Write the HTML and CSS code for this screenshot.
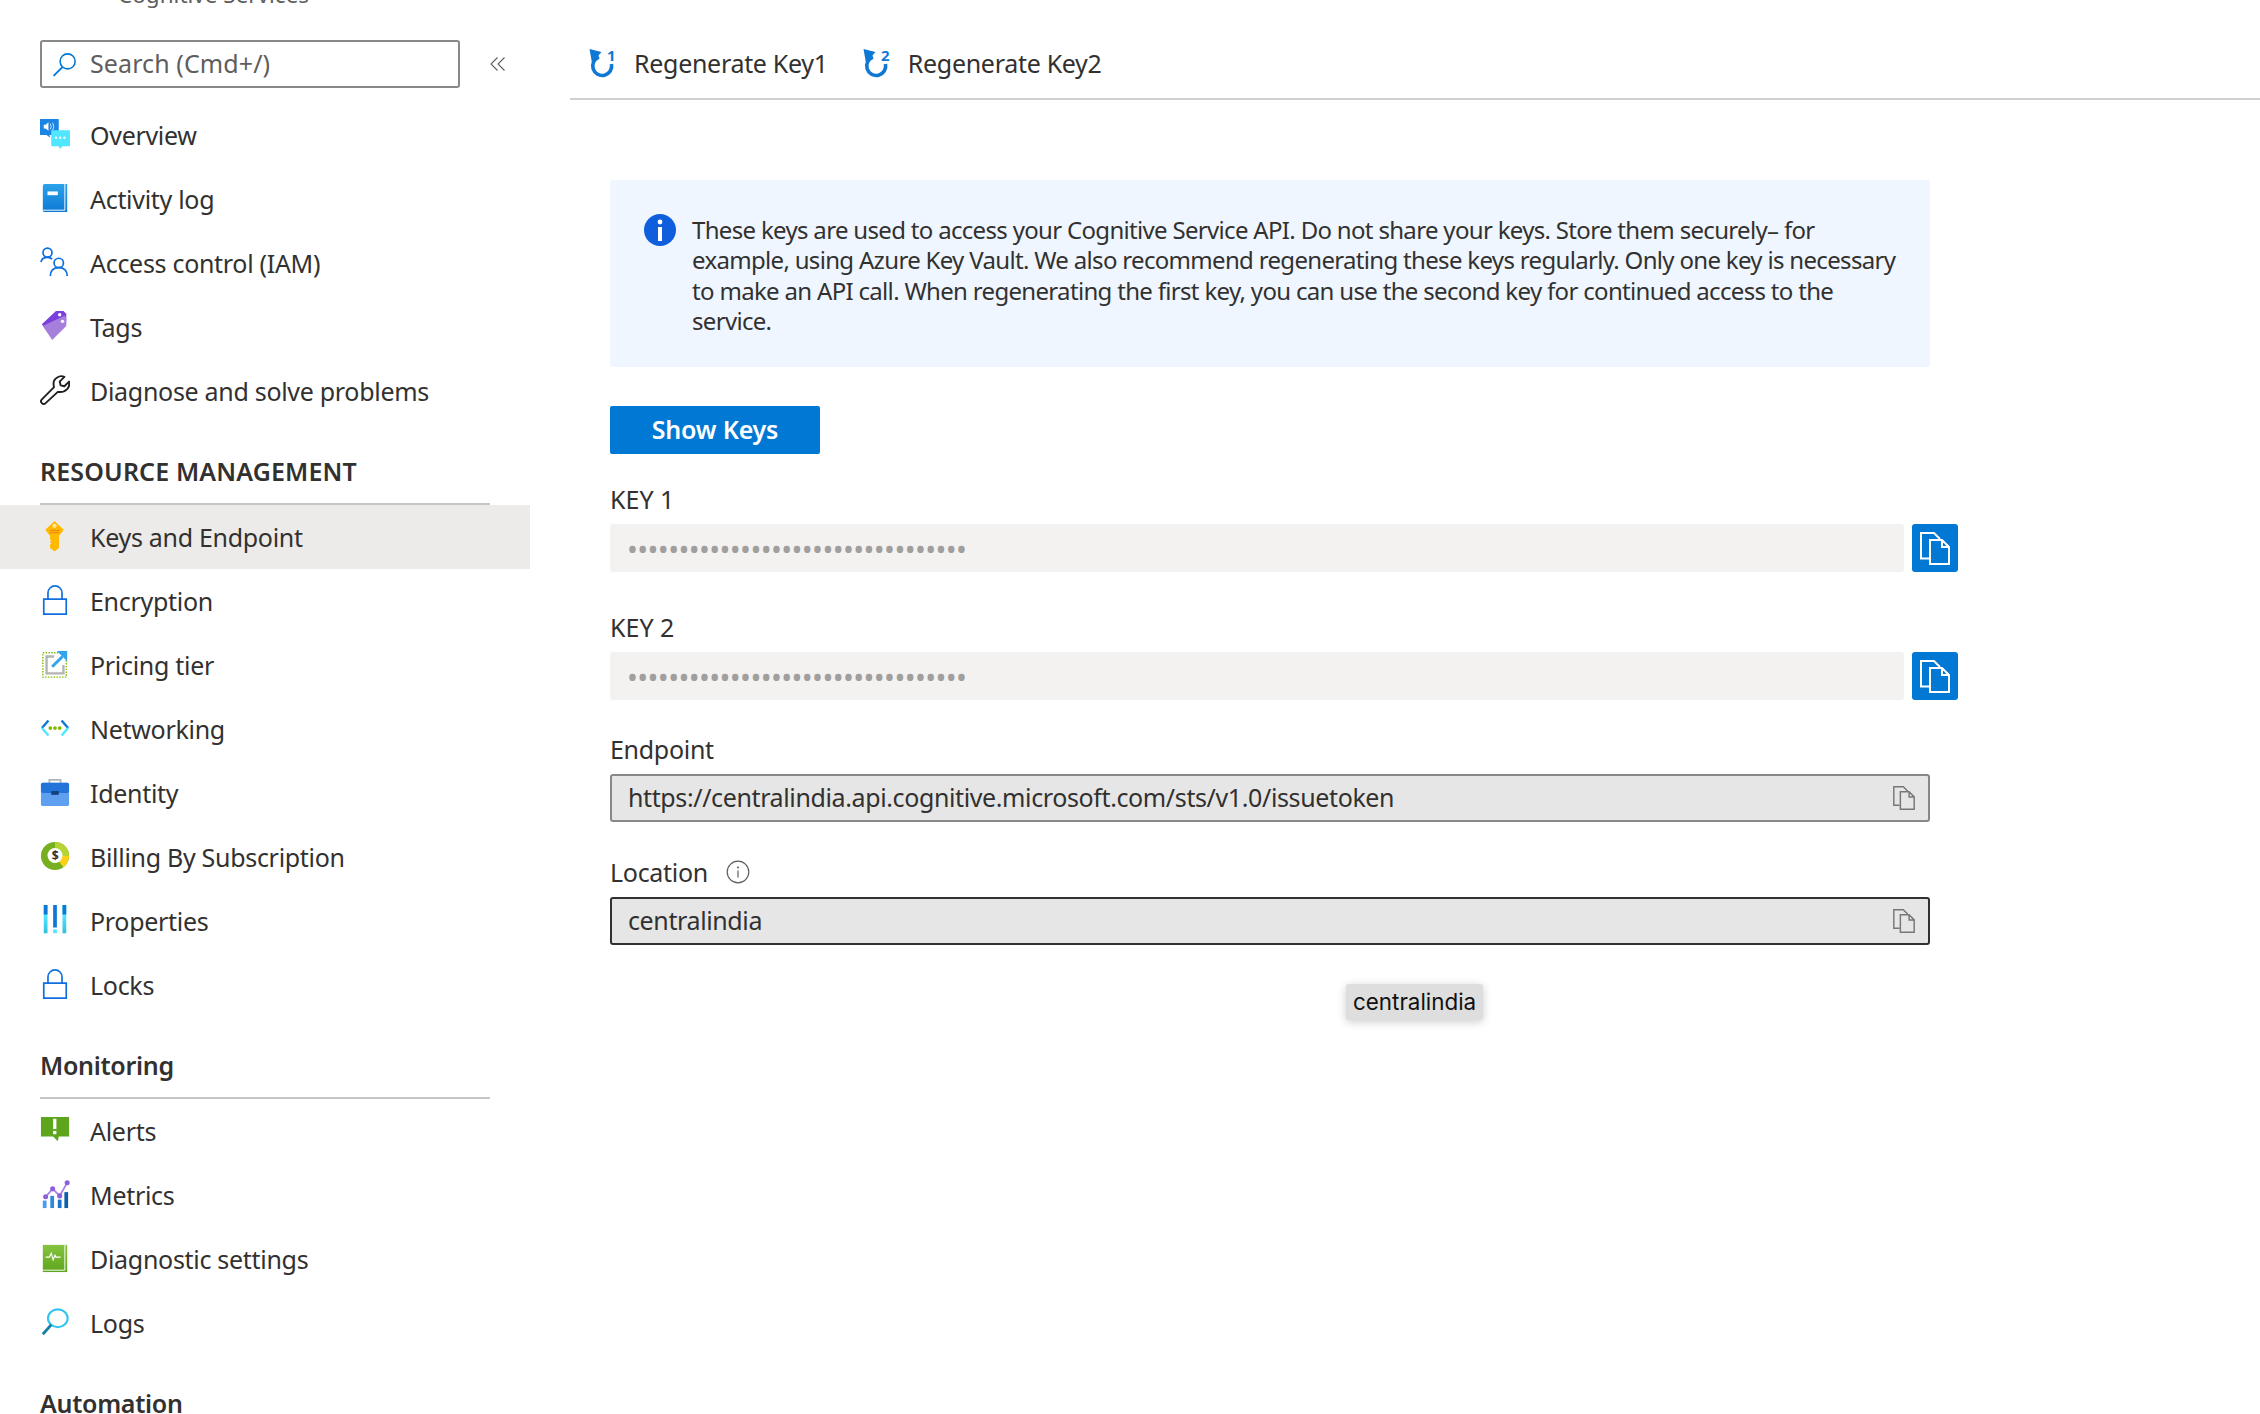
FILE: index.html
```html
<!DOCTYPE html>
<html lang="en">
<head>
    <meta charset="UTF-8">
    <title>Keys and Endpoint</title>
    <link rel="stylesheet" href="styles.css">
</head>
<body>
<div class="page">
    <!-- left menu -->
    <aside class="sidebar">
        <div class="resource-type">Cognitive Services</div>
        <div class="search-row">
            <div class="search-box">
                <svg class="search-icon" viewBox="0 0 24 24"><circle cx="15" cy="9" r="7.2" fill="none" stroke="#0078d4" stroke-width="1.5"/><path d="M10 14.5 1.5 23" stroke="#0078d4" stroke-width="1.8"/></svg>
                <span>Search (Cmd+/)</span>
            </div>
            <svg class="collapse-icon" viewBox="0 0 16 16"><path d="M7.5 1.5 1 8l6.5 6.5M14.5 1.5 8 8l6.5 6.5" fill="none" stroke="#605e5c" stroke-width="1.1"/></svg>
        </div>

        <div class="nav-item">
            <svg class="nav-icon" viewBox="0 0 32 32"><path d="M0 0h20v17H10l1 3-4-3H0z" fill="#1b85e4"/><path d="M12 12h20v17h-8l-3 3-1-3h-8z" fill="#50e6ff"/><path d="M4 6h2l3-2.500v9L6 10H4z" fill="#fff"/><path d="M11 5q2 3 0 6M13.500 4q2.500 4 0 8" fill="none" stroke="#fff" stroke-width="0.800"/><circle cx="17" cy="20" r="1.300" fill="#fff"/><circle cx="21.500" cy="20" r="1.300" fill="#fff"/><circle cx="26" cy="20" r="1.300" fill="#fff"/></svg>
            <span>Overview</span>
        </div>
        <div class="nav-item">
            <svg class="nav-icon" viewBox="0 0 32 32"><defs><linearGradient id="book" x1="0" y1="0" x2="0" y2="1"><stop offset="0" stop-color="#2ba3ea"/><stop offset="1" stop-color="#0f78d4"/></linearGradient></defs><path d="M3 3q0-2 2-2h24v30H5q-2 0-2-2z" fill="url(#book)"/><path d="M26.500 1v28H3" fill="none" stroke="#fff" stroke-width="1"/><rect x="8" y="9" width="11" height="4" fill="#fff"/></svg>
            <span>Activity log</span>
        </div>
        <div class="nav-item">
            <svg class="nav-icon" viewBox="0 0 32 32"><g fill="none" stroke="#0f6fde" stroke-width="1.800"><circle cx="8" cy="6" r="4.800"/><path d="M1 16q1-5 7-5 3 0 5 2"/><circle cx="20" cy="17" r="5"/><path d="M11 31q0-9 9-9t9 9"/></g></svg>
            <span>Access control (IAM)</span>
        </div>
        <div class="nav-item">
            <svg class="nav-icon" viewBox="0 0 32 32"><path d="M17 0h8l3 3v9L12 28 2 14z" fill="#7b3fdc"/><path d="M26 5l2 2v9L13 31 3 16z" fill="#a67fdc"/><circle cx="21" cy="4" r="1.800" fill="#fff"/><circle cx="24" cy="11" r="1.800" fill="#fff"/></svg>
            <span>Tags</span>
        </div>
        <div class="nav-item">
            <svg class="nav-icon" viewBox="0 0 32 32"><path d="M2 26 15 13q-2-7 3-10 4-3 8-1l-5 5 1 4 4 1 5-5q1 5-2 8-4 4-10 3L6 30q-2 2-4 0t0-4z" fill="none" stroke="#201f1e" stroke-width="2" stroke-linejoin="round"/></svg>
            <span>Diagnose and solve problems</span>
        </div>

        <div class="nav-head nav-head-caps">RESOURCE MANAGEMENT</div>
        <div class="nav-item selected">
            <svg class="nav-icon" viewBox="0 0 32 32"><path d="M15.500 1l9 8.500-5 6v13l-4 3-4-3v-3l2-1.500-2-1.500 2-1.500-2-1.500v-4l-5-6z" fill="#ffb900" stroke="#ffb900" stroke-width="1.500" stroke-linejoin="round"/><circle cx="15.500" cy="5" r="2.200" fill="#ffe9a6"/><path d="M10.500 10h10M10.500 12.500h10" stroke="#f07a12" stroke-width="1"/></svg>
            <span>Keys and Endpoint</span>
        </div>
        <div class="nav-item">
            <svg class="nav-icon" viewBox="0 0 32 32"><path d="M4 15h24v16H4zM8.500 15V8.500a7.500 7.500 0 0 1 15 0V15" fill="none" stroke="#0f6fde" stroke-width="1.800"/></svg>
            <span>Encryption</span>
        </div>
        <div class="nav-item">
            <svg class="nav-icon" viewBox="0 0 32 32"><rect x="3" y="4" width="25" height="26" fill="none" stroke="#7fba00" stroke-width="1.500" stroke-dasharray="1.500 1.500"/><path d="M15 8H7v18h18v-9" fill="none" stroke="#b3b3b3" stroke-width="2.500"/><path d="M13 19 24 8" stroke="#32a4ee" stroke-width="3.200"/><path d="M18 2h11v11z" fill="#32a4ee"/></svg>
            <span>Pricing tier</span>
        </div>
        <div class="nav-item">
            <svg class="nav-icon" viewBox="0 0 32 32"><path d="M9 8 2 16" stroke="#0f78d4" stroke-width="2.500"/><path d="M2 16l7 8" stroke="#50e6ff" stroke-width="2.500"/><path d="M23 8l7 8" stroke="#0f78d4" stroke-width="2.500"/><path d="M30 16l-7 8" stroke="#50e6ff" stroke-width="2.500"/><circle cx="11" cy="16" r="2" fill="#7fba00"/><circle cx="16" cy="16" r="2" fill="#7fba00"/><circle cx="21" cy="16" r="2" fill="#7fba00"/></svg>
            <span>Networking</span>
        </div>
        <div class="nav-item">
            <svg class="nav-icon" viewBox="0 0 32 32"><path d="M10 7V3h12v4" fill="none" stroke="#b3b3b3" stroke-width="1.800"/><rect x="1" y="6" width="30" height="25" rx="2" fill="#5ea0ef"/><rect x="1" y="6" width="30" height="11" rx="2" fill="#2473d8"/><rect x="12" y="15" width="8" height="4" fill="#143f7a"/></svg>
            <span>Identity</span>
        </div>
        <div class="nav-item">
            <svg class="nav-icon" viewBox="0 0 32 32"><circle cx="16" cy="16" r="15" fill="#76b021"/><path d="M16 1a15 15 0 0 1 15 15H16z" fill="#b4d334"/><path d="M31 16a15 15 0 0 1-6 12L16 16z" fill="#fcd116"/><circle cx="16" cy="15.500" r="8" fill="#fff"/><text class="billing-s" x="16" y="20">$</text></svg>
            <span>Billing By Subscription</span>
        </div>
        <div class="nav-item">
            <svg class="nav-icon" viewBox="0 0 32 32"><defs><linearGradient id="bars" x1="0" y1="0" x2="0" y2="1"><stop offset="0.400" stop-color="#50e6ff"/><stop offset="1" stop-color="#32bedd"/></linearGradient></defs><path d="M4 0h4v30H4zM24 0h4v30h-4z" fill="url(#bars)"/><path d="M14 0h4v24h-4z" fill="#0f78d4"/><path d="M4 0h4v10H4zM24 0h4v10h-4z" fill="#0f78d4"/><path d="M14 26h4v4h-4z" fill="#50e6ff"/></svg>
            <span>Properties</span>
        </div>
        <div class="nav-item">
            <svg class="nav-icon" viewBox="0 0 32 32"><path d="M4 15h24v16H4zM8.500 15V8.500a7.500 7.500 0 0 1 15 0V15" fill="none" stroke="#0f6fde" stroke-width="1.800"/></svg>
            <span>Locks</span>
        </div>

        <div class="nav-head">Monitoring</div>
        <div class="nav-item">
            <svg class="nav-icon" viewBox="0 0 32 32"><path d="M1 2h30v21H20l-1 5-5-5H1z" fill="#5ea51e"/><rect x="14" y="4" width="3.500" height="11" fill="#fff"/><rect x="14" y="17" width="3.500" height="3.500" fill="#fff"/></svg>
            <span>Alerts</span>
        </div>
        <div class="nav-item">
            <svg class="nav-icon" viewBox="0 0 32 32"><path d="M3 31v-8h4v8z" fill="#4a9bf0"/><path d="M11 31V18h4v13z" fill="#2e87e0"/><path d="M19 31v-9h4v9z" fill="#1a73c9"/><path d="M26 31V14h4v17z" fill="#0f5fa8"/><path d="M6 19l7.500-8.500L21 18l8-14" fill="none" stroke="#a67fe8" stroke-width="1.800"/><circle cx="6" cy="19" r="2.700" fill="#8c5fe0"/><circle cx="13.500" cy="10.500" r="2.700" fill="#8c5fe0"/><circle cx="21" cy="18" r="2.700" fill="#8c5fe0"/><circle cx="29" cy="4" r="2.700" fill="#8c5fe0"/></svg>
            <span>Metrics</span>
        </div>
        <div class="nav-item">
            <svg class="nav-icon" viewBox="0 0 32 32"><defs><linearGradient id="gbook" x1="0" y1="0" x2="0" y2="1"><stop offset="0" stop-color="#86c440"/><stop offset="1" stop-color="#5ea51e"/></linearGradient></defs><path d="M3 2h26v29H3z" fill="url(#gbook)"/><path d="M26.500 2v27H3" fill="none" stroke="#fff" stroke-width="1"/><path d="M6 15h4l2-4 2 7 2-5 1 2h5" fill="none" stroke="#fff" stroke-width="1.200"/></svg>
            <span>Diagnostic settings</span>
        </div>
        <div class="nav-item">
            <svg class="nav-icon" viewBox="0 0 32 32"><ellipse cx="19" cy="12" rx="10.500" ry="9.500" fill="none" stroke="#32c3ee" stroke-width="2.200"/><path d="M12 19 3 29" stroke="#1a7fa8" stroke-width="3"/></svg>
            <span>Logs</span>
        </div>

        <div class="nav-head nav-head-last">Automation</div>
    </aside>

    <!-- keys panel -->
    <main class="main">
        <div class="toolbar">
            <div class="tool-btn">
                <svg class="tool-icon" viewBox="0 0 27 29"><path d="M10 8A9.500 9.500 0 1 0 22.500 15" fill="none" stroke="#0f78d4" stroke-width="3.600"/><path d="M.5 0l12 3L3 14z" fill="#0f78d4"/><text class="tool-digit" x="18" y="12">1</text></svg>
                <span>Regenerate Key1</span>
            </div>
            <div class="tool-btn">
                <svg class="tool-icon" viewBox="0 0 27 29"><path d="M10 8A9.500 9.500 0 1 0 22.500 15" fill="none" stroke="#0f78d4" stroke-width="3.600"/><path d="M.5 0l12 3L3 14z" fill="#0f78d4"/><text class="tool-digit" x="18" y="12">2</text></svg>
                <span>Regenerate Key2</span>
            </div>
        </div>

        <div class="content">
            <div class="banner">
                <svg class="info-icon" viewBox="0 0 32 32"><circle cx="16" cy="16" r="16" fill="#0f5fdc"/><circle cx="16" cy="8" r="2.400" fill="#fff"/><rect x="14" y="13" width="4" height="14" fill="#fff"/></svg>
                <p>These keys are used to access your Cognitive Service API. Do not share your keys. Store them securely– for example, using Azure Key Vault. We also recommend regenerating these keys regularly. Only one key is necessary to make an API call. When regenerating the first key, you can use the second key for continued access to the service.</p>
            </div>

            <button class="show-keys">Show Keys</button>

            <div class="field-label label-key1">KEY 1</div>
            <div class="key-row">
                <div class="key-value">•••••••••••••••••••••••••••••••••</div>
                <div class="copy-btn">
                    <svg viewBox="0 0 30 33"><use href="#copy-shape"/></svg>
                </div>
            </div>

            <div class="field-label label-key2">KEY 2</div>
            <div class="key-row">
                <div class="key-value">•••••••••••••••••••••••••••••••••</div>
                <div class="copy-btn">
                    <svg viewBox="0 0 30 33"><use href="#copy-shape"/></svg>
                </div>
            </div>

            <div class="field-label label-endpoint">Endpoint</div>
            <div class="text-field">
                <span>https://centralindia.api.cognitive.microsoft.com/sts/v1.0/issuetoken</span>
                <svg class="field-copy" viewBox="0 0 30 33"><use href="#copy-shape"/></svg>
            </div>

            <div class="field-label label-location">Location
                <svg class="hint-icon" viewBox="0 0 24 24"><circle cx="12" cy="12" r="10.800" fill="none" stroke="#605e5c" stroke-width="1.200"/><circle cx="12" cy="7.500" r="1" fill="#605e5c"/><path d="M12 10.500v7" stroke="#605e5c" stroke-width="1.200"/></svg>
            </div>
            <div class="text-field focused">
                <span>centralindia</span>
                <svg class="field-copy" viewBox="0 0 30 33"><use href="#copy-shape"/></svg>
                <div class="tooltip">centralindia</div>
            </div>
        </div>
    </main>
</div>

<svg class="svg-defs" width="0" height="0">
    <symbol id="copy-shape" viewBox="0 0 30 33">
        <path d="M9 26.500H1V1h13l6 6" fill="none" stroke="currentColor" stroke-width="2"/>
        <path d="M10 8h12l7 7v17H10zM22 8v7h7" fill="none" stroke="currentColor" stroke-width="2"/>
    </symbol>
</svg>
</body>
</html>
```

FILE: styles.css
```css
/* page */
html, body {
    margin: 0;
    height: 100%;
    background: #fff;
    overflow: hidden;
}

body {
    font-family: "Noto Sans", "Open Sans", sans-serif;
    color: #323130;
}

.page {
    display: flex;
    height: 1414px;
    overflow: hidden;
}

.svg-defs {
    display: block;
}

/* sidebar */
.sidebar {
    width: 530px;
    flex-shrink: 0;
}

.resource-type {
    height: 38px;
    margin-top: -20px;
    padding-left: 118px;
    font-size: 22.5px;
    line-height: 30px;
    color: #605e5c;
}

.search-row {
    display: flex;
    align-items: center;
    height: 48px;
    margin: 22px 0 15px 40px;
}

.search-box {
    display: flex;
    align-items: center;
    width: 420px;
    height: 48px;
    box-sizing: border-box;
    border: 2px solid #8a8886;
    border-radius: 3px;
    padding-left: 10px;
    font-size: 25px;
    color: #605e5c;
}

.search-icon {
    width: 25px;
    height: 25px;
    margin-right: 13px;
}

.search-box span {
    letter-spacing: 0.1px;
    margin-top: -2px;
}

.collapse-icon {
    width: 16px;
    height: 16px;
    margin-left: 30px;
}

.nav-item {
    display: flex;
    align-items: center;
    height: 64px;
    padding-left: 40px;
    font-size: 25px;
    letter-spacing: -0.3px;
}

.nav-item.selected {
    background: #edebe9;
}

.nav-icon {
    width: 30px;
    height: 30px;
    flex-shrink: 0;
    margin-right: 20px;
    margin-top: -3px;
}

.nav-head {
    height: 80px;
    margin: 0 40px;
    border-bottom: 2px solid #c8c6c4;
    font-size: 25px;
    font-weight: 600;
    line-height: 96px;
    letter-spacing: -0.3px;
}

.nav-head-caps {
    letter-spacing: 0.15px;
}

.nav-head-last {
    border-bottom: 0;
    line-height: 97px;
}

.billing-s {
    font-family: "Noto Sans", sans-serif;
    font-size: 13px;
    font-weight: 700;
    text-anchor: middle;
    fill: #323130;
}

/* main */
.main {
    flex: 1;
    min-width: 0;
}

.toolbar {
    display: flex;
    align-items: center;
    height: 70px;
    margin-left: 40px;
    padding-top: 28px;
    border-bottom: 2px solid #d2d0ce;
    font-size: 25px;
    letter-spacing: -0.3px;
}

.tool-btn {
    display: flex;
    align-items: center;
    margin-left: 19px;
    margin-right: 16px;
}

.tool-icon {
    width: 27px;
    height: 29px;
    margin-right: 18px;
    overflow: visible;
}

.tool-digit {
    font-size: 15px;
    font-weight: 700;
    fill: #0f78d4;
}

.content {
    position: relative;
    width: 1348px;
    padding-left: 80px;
}

.banner {
    display: flex;
    width: 1320px;
    height: 187px;
    box-sizing: border-box;
    margin-top: 80px;
    padding: 35px 30px 0 34px;
    background: #eff6ff;
    border-radius: 3px;
}

.banner p {
    margin: 0;
    font-size: 24px;
    line-height: 30.3px;
    letter-spacing: -0.68px;
}

.info-icon {
    width: 32px;
    height: 32px;
    flex-shrink: 0;
    margin: -1px 16px 0 0;
}

.show-keys {
    display: block;
    width: 210px;
    height: 48px;
    margin-top: 39px;
    padding: 0 0 2px;
    border: 0;
    border-radius: 2px;
    background: #0078d4;
    color: #fff;
    font-family: inherit;
    font-size: 25px;
    font-weight: 600;
    letter-spacing: -0.2px;
}

.field-label {
    display: flex;
    align-items: center;
    height: 36px;
    margin-bottom: 7px;
    font-size: 25px;
    letter-spacing: -0.3px;
}

.label-key1 { margin-top: 27px; letter-spacing: 0; }
.label-key2 { margin-top: 37px; letter-spacing: 0; }
.label-endpoint { margin-top: 31px; }
.label-location { margin-top: 32px; }

.hint-icon {
    width: 24px;
    height: 24px;
    margin-left: 18px;
}

.key-row {
    display: flex;
    gap: 8px;
    width: 1348px;
}

.key-value {
    display: flex;
    align-items: center;
    width: 1294px;
    height: 48px;
    padding-left: 17px;
    box-sizing: border-box;
    background: #f3f2f1;
    border-radius: 3px;
    font-size: 29px;
    letter-spacing: -0.62px;
    color: #a19f9d;
}

.copy-btn {
    display: flex;
    align-items: center;
    justify-content: center;
    width: 46px;
    height: 48px;
    background: #0078d4;
    border-radius: 3px;
    color: #fff;
}

.copy-btn svg {
    width: 30px;
    height: 33px;
}

.text-field {
    position: relative;
    display: flex;
    align-items: center;
    justify-content: space-between;
    width: 1320px;
    height: 48px;
    box-sizing: border-box;
    padding: 0 13px 0 16px;
    background: #e6e6e6;
    border: 2px solid #8a8886;
    border-radius: 3px;
    font-size: 25px;
    letter-spacing: -0.38px;
}

.text-field > span {
    margin-top: -2px;
}

.text-field.focused {
    border-color: #323130;
}

.field-copy {
    width: 22px;
    height: 24px;
    color: #797775;
}

/* hover tooltip over the location field */
.tooltip {
    position: absolute;
    top: 85px;
    left: 734px;
    padding: 5px 7px;
    background: #dddedd;
    border-radius: 3px;
    box-shadow: 0 2px 10px rgba(0, 0, 0, 0.2);
    font-family: Inter, "Liberation Sans", sans-serif;
    font-size: 22.4px;
    line-height: 26px;
    letter-spacing: 0;
    color: #111;
}
```
